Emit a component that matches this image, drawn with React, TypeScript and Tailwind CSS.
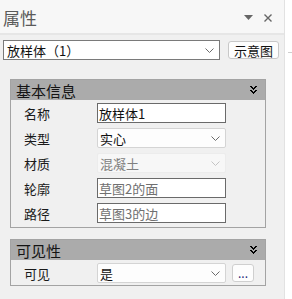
import React from "react";

const font = { fontFamily: '"Noto Sans CJK SC", "Noto Sans", sans-serif' };

function Chevron({ color = "#6b6b6b" }: { color?: string }) {
  return (
    <svg width="9" height="5" viewBox="0 0 9 5" fill="none">
      <path d="M0.5 0.5 L4.5 4.5 L8.5 0.5" stroke={color} strokeWidth="1" />
    </svg>
  );
}

function DoubleChevron() {
  return (
    <svg width="7" height="8" viewBox="0 0 7 8" shapeRendering="crispEdges">
      <path d="M0 0h2v1H0zM5 0h2v1H5zM1 1h2v1H1zM4 1h2v1H4zM2 2h3v1H2zM3 3h1v1H3zM0 4h2v1H0zM5 4h2v1H5zM1 5h2v1H1zM4 5h2v1H4zM2 6h3v1H2zM3 7h1v1H3z" fill="#000" />
    </svg>
  );
}

function Row({ label, children }: { label: string; children: React.ReactNode }) {
  return (
    <div className="flex items-center h-[20px]">
      <div className="w-[73px] text-[13px] text-[#1a1a1a] leading-none">{label}</div>
      {children}
    </div>
  );
}

function TextBox({ value, placeholder }: { value?: string; placeholder?: boolean }) {
  return (
    <div
      className={`w-[129px] h-[20px] border border-[#6a6a6a] bg-white flex items-center pl-[1px] text-[13px] leading-none ${
        placeholder ? "text-[#707070]" : "text-[#111]"
      }`}
    >
      {value}
    </div>
  );
}

function SelectBox({ value, disabled }: { value: string; disabled?: boolean }) {
  return (
    <div
      className={`w-[129px] h-[20px] rounded-[2px] border flex items-center justify-between pl-[2px] pr-[5px] text-[13px] leading-none ${
        disabled
          ? "border-[#ececec] bg-[#f7f7f7] text-[#808080]"
          : "border-[#d4d4d4] bg-[#fdfdfd] text-[#111]"
      }`}
    >
      <span>{value}</span>
      <Chevron color={disabled ? "#c4c4c4" : "#6b6b6b"} />
    </div>
  );
}

function Section({ title, children }: { title: string; children: React.ReactNode }) {
  return (
    <div className="mx-[10px] w-[256px] border border-[#a3a3a3] bg-[#f0f0f0]">
      <div className="h-[20px] bg-[#ababab] flex items-center justify-between pl-[5px] pr-[8px]">
        <span className="text-[15px] text-[#141414] leading-none">{title}</span>
        <DoubleChevron />
      </div>
      {children}
    </div>
  );
}

export default function App() {
  return (
    <div className="flex w-[292px] h-[299px] bg-[#f0f0f0]" style={font}>
      <div className="w-[285px] h-full border-r border-[#e2e2e2] flex flex-col">
        <div className="h-[35px] bg-[#f7f7f7] border-b-2 border-[#e6e6e6] flex items-center justify-between pl-[3px] pr-[12px]">
          <span className="text-[17px] text-[#5a5a5a] leading-none mt-[2px]">属性</span>
          <div className="flex items-center gap-[11px] mt-[2px]">
            <svg width="9" height="5" viewBox="0 0 9 5">
              <path d="M0 0 H9 L4.5 5 Z" fill="#666" />
            </svg>
            <svg width="8" height="8" viewBox="0 0 8 8">
              <path d="M0.5 0.5 L7.5 7.5 M7.5 0.5 L0.5 7.5" stroke="#666" strokeWidth="1.4" />
            </svg>
          </div>
        </div>
        <div className="flex items-center mt-[5px] pl-[3px]">
          <div className="w-[217px] h-[20px] border border-[#7a7a7a] bg-white flex items-center justify-between pl-[3px] pr-[5px] text-[13px] leading-none text-[#111]">
            <span>放样体（1）</span>
            <Chevron />
          </div>
          <div className="ml-[8px] w-[51px] h-[18px] rounded-[3px] border border-[#c8c8c8] bg-[#fdfdfd] flex items-center justify-center text-[13px] leading-none text-[#111]">
            示意图
          </div>
        </div>
        <div className="mt-[19px]">
          <Section title="基本信息">
            <div className="flex flex-col gap-[5px] pt-[3px] pb-[4px] pl-[13px]">
              <Row label="名称">
                <TextBox value="放样体1" />
              </Row>
              <Row label="类型">
                <SelectBox value="实心" />
              </Row>
              <Row label="材质">
                <SelectBox value="混凝土" disabled />
              </Row>
              <Row label="轮廓">
                <TextBox value="草图2的面" placeholder />
              </Row>
              <Row label="路径">
                <TextBox value="草图3的边" placeholder />
              </Row>
            </div>
          </Section>
        </div>
        <div className="mt-[11px]">
          <Section title="可见性">
            <div className="flex items-center pt-[3px] pb-[2px] pl-[13px]">
              <Row label="可见">
                <SelectBox value="是" />
              </Row>
              <div className="ml-[6px] w-[22px] h-[18px] rounded-[3px] border border-[#cfcfcf] bg-[#fdfdfd] flex items-center justify-center text-[12px] leading-none text-[#2a2a7a]">
                ...
              </div>
            </div>
          </Section>
        </div>
      </div>
      <div className="flex-1 h-full bg-white flex flex-col">
        <div className="h-[52px]" />
        <div className="h-[1px] ml-[3px] bg-[#cfcfcf]" />
      </div>
    </div>
  );
}
